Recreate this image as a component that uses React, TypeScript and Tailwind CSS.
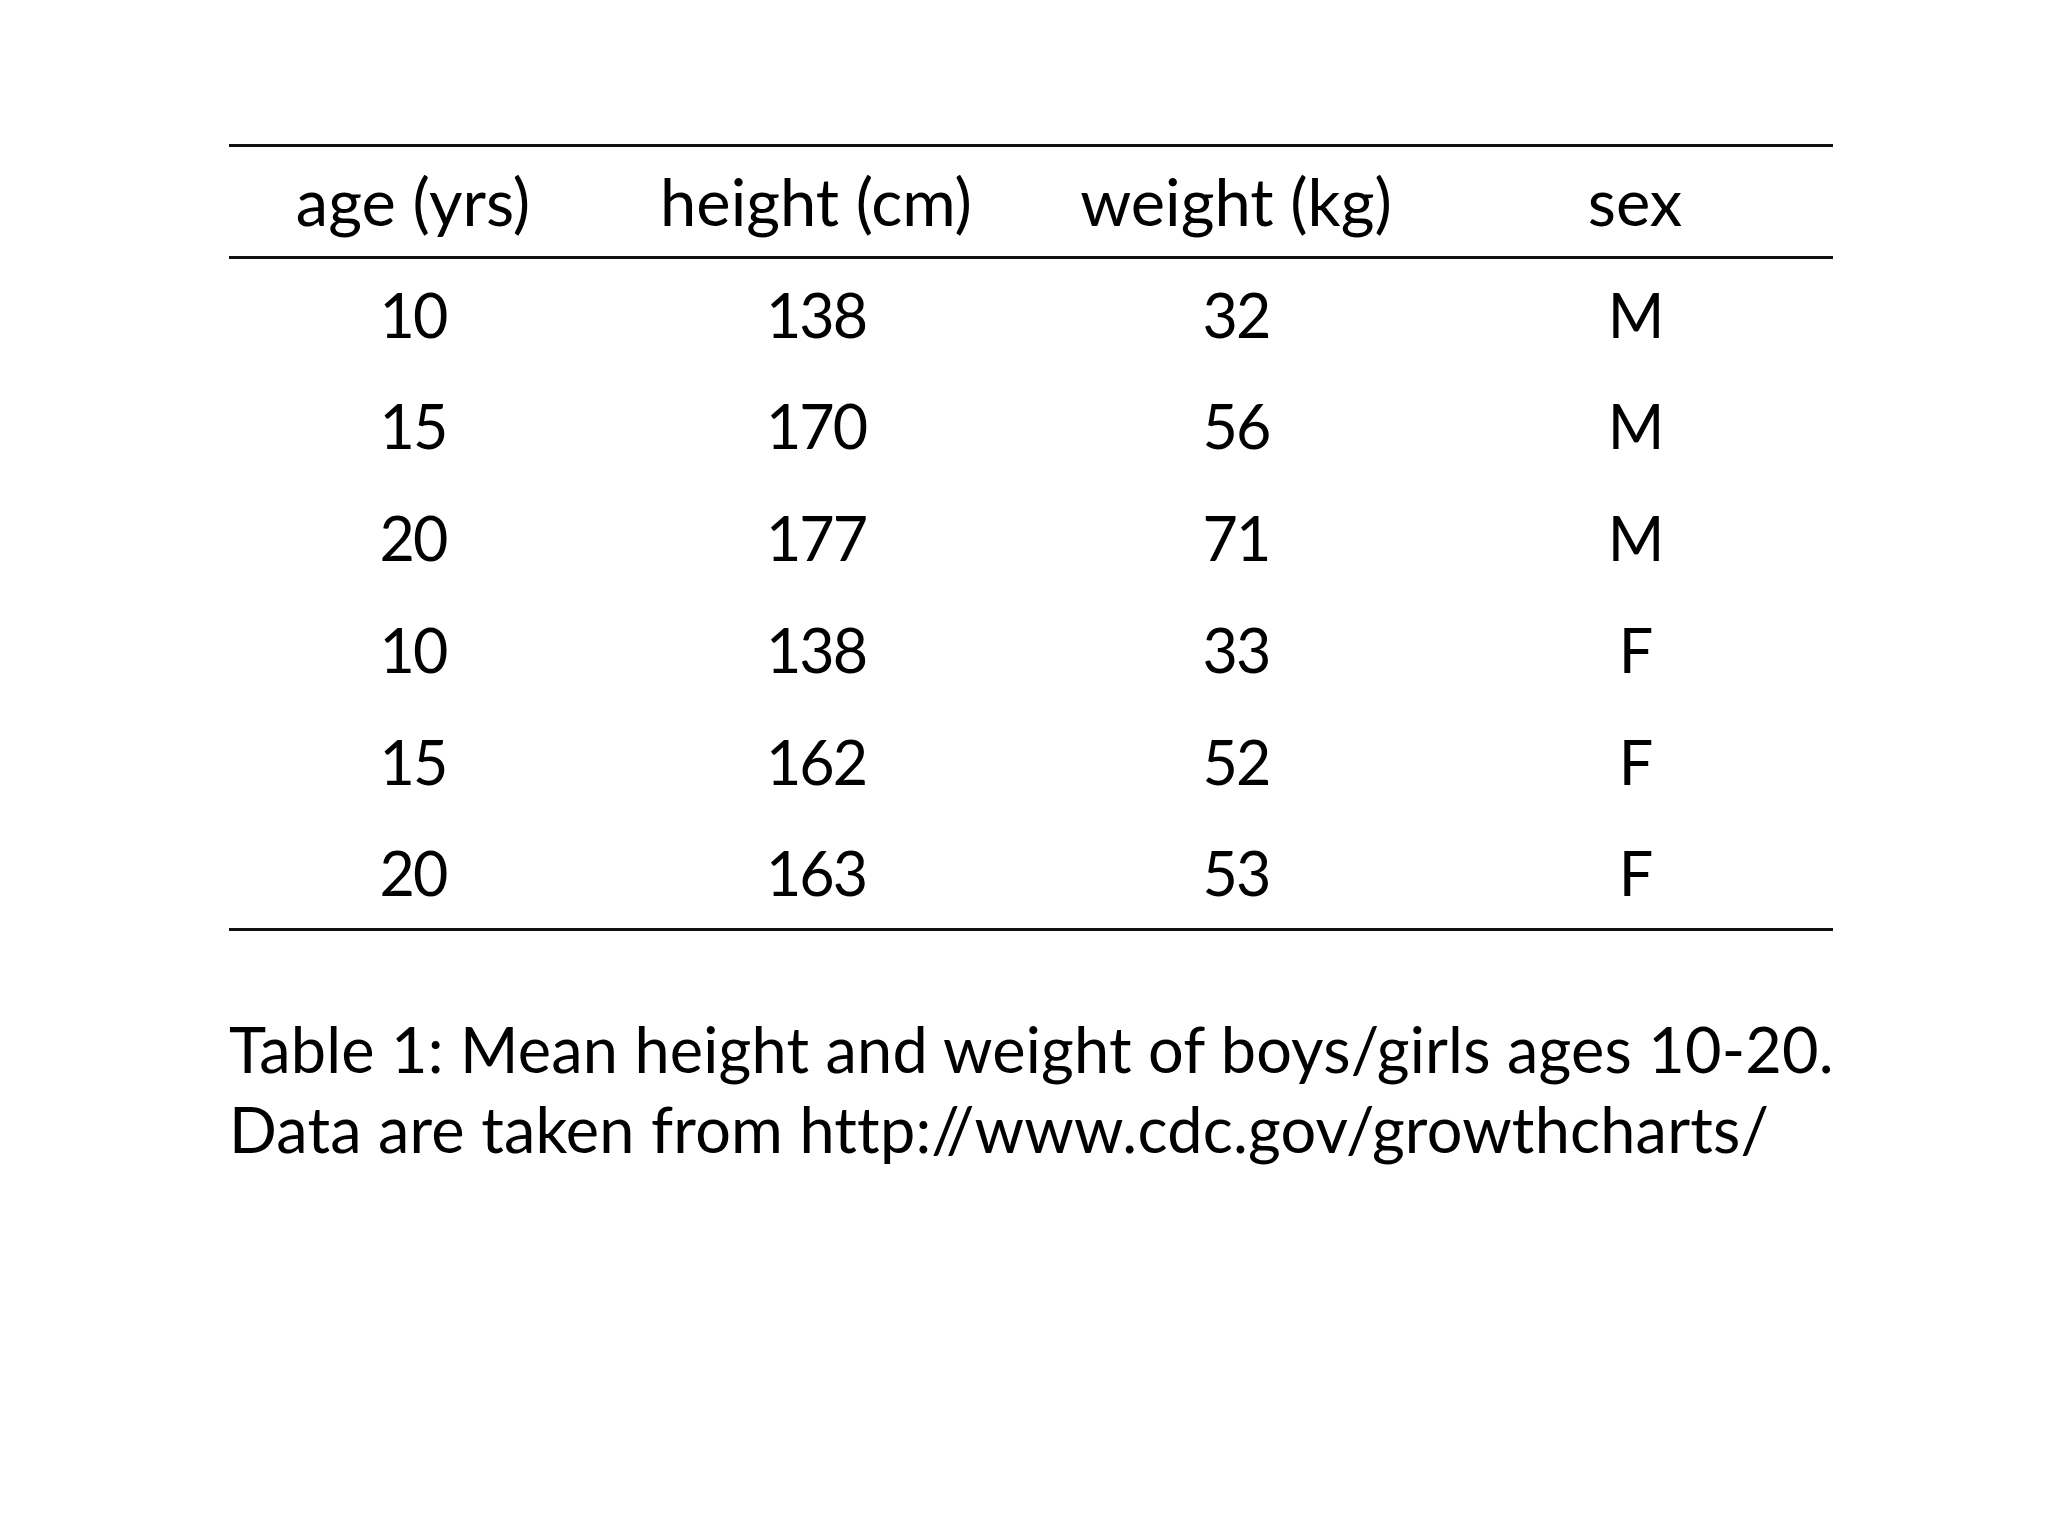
const header = ["age (yrs)", "height (cm)", "weight (kg)", "sex"];

const rows = [
  ["10", "138", "32", "M"],
  ["15", "170", "56", "M"],
  ["20", "177", "71", "M"],
  ["10", "138", "33", "F"],
  ["15", "162", "52", "F"],
  ["20", "163", "53", "F"],
];

export default function App() {
  return (
    <div className="w-[2048px] h-[1536px] bg-white text-black font-['Lato',sans-serif]">
      <div className="ml-[229px] pt-[144px] w-[1604px]">
        <table className="w-full table-fixed border-collapse">
          <colgroup>
            <col className="w-[368px]" />
            <col className="w-[438px]" />
            <col className="w-[402px]" />
            <col className="w-[396px]" />
          </colgroup>
          <thead>
            <tr className="border-y-[3px] border-[#111]">
              {header.map((h) => (
                <th key={h} className="h-[112px] p-0 text-center font-normal text-[65px]">
                  {h}
                </th>
              ))}
            </tr>
          </thead>
          <tbody className="border-b-[3px] border-[#111]">
            {rows.map((r, i) => (
              <tr key={i}>
                {r.map((c, j) => (
                  <td key={j} className="h-[112px] p-0 text-center text-[61px] tracking-[-2px]">
                    {c}
                  </td>
                ))}
              </tr>
            ))}
          </tbody>
        </table>
        <p className="mt-[78px] whitespace-nowrap text-[63px] leading-[80px] tracking-[0.2px]">
          Table 1: Mean height and weight of boys/girls ages 10-20.
          <br />
          Data are taken from http://www.cdc.gov/growthcharts/
        </p>
      </div>
    </div>
  );
}
